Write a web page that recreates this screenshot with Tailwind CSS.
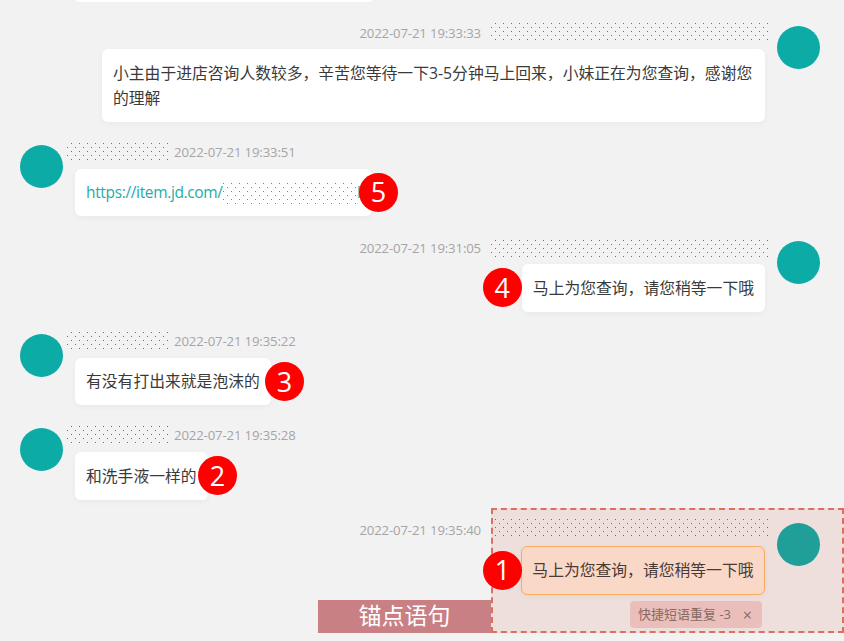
<!DOCTYPE html>
<html lang="zh-CN">
<head>
  <meta charset="UTF-8" />
  <meta name="viewport" content="width=device-width, initial-scale=1.0"/>
  <title>会话详情</title>
  <script src="https://cdn.jsdelivr.net/npm/@tailwindcss/browser@4"></script>
</head>
<body class="bg-[#f2f2f2] text-[#3a3a3a] font-['Open_Sans','Noto_Sans_CJK_SC',sans-serif]">

  <!-- shared dot patterns for the masked names -->
  <svg class="absolute w-0 h-0">
    <defs>
      <pattern id="dots" width="8" height="8" patternUnits="userSpaceOnUse">
        <rect x="4" y="1" width="1" height="1" fill="#3a8379"/>
        <rect x="0" y="5" width="1" height="1" fill="#3a8379"/>
      </pattern>
      <pattern id="dots-link" width="8" height="8" patternUnits="userSpaceOnUse">
        <rect x="0" y="1" width="1" height="1" fill="#18aca6"/>
        <rect x="4" y="5" width="1" height="1" fill="#18aca6"/>
      </pattern>
    </defs>
  </svg>

  <div class="relative w-[844px] h-[641px] overflow-hidden">

    <!-- end of previous bubble -->
    <div class="w-[296px] h-[2px] ml-[76px] bg-white rounded-b-md"></div>

    <!-- Message 1 -->
    <div class="flex justify-end gap-3 pr-6 mt-5">
      <div class="flex flex-col items-end">
        <div class="flex items-start gap-[10px] h-[27px] -mr-1">
          <span class="mt-[2px] text-[13.2px] tracking-[-0.15px] text-[#a5a5a5]">2022-07-21 19:33:33</span>
          <svg class="w-[278px] h-[18px]"><rect width="278" height="18" fill="url(#dots)"/></svg>
        </div>
        <div class="w-[663px] px-[11px] py-[11.5px] bg-white rounded-md text-[15.8px] leading-[25px] shadow-[0_2px_6px_rgba(0,0,0,0.04)]">小主由于进店咨询人数较多，辛苦您等待一下3-5分钟马上回来，小妹正在为您查询，感谢您的理解</div>
      </div>
      <div class="w-[43px] h-[43px] mt-1 rounded-full bg-[#0daba6]"></div>
    </div>

    <!-- Message 2 -->
    <div class="flex gap-3 pl-5 mt-[21px]">
      <div class="w-[43px] h-[43px] mt-[2px] rounded-full bg-[#0daba6]"></div>
      <div class="flex flex-col items-start">
        <div class="flex items-start gap-[3px] h-[26px] -ml-2 -mt-px pb-px box-content">
          <svg class="w-[104px] h-[18px]"><rect width="104" height="18" fill="url(#dots)"/></svg>
          <span class="mt-px text-[13.2px] tracking-[-0.15px] text-[#a5a5a5]">2022-07-21 19:33:51</span>
        </div>
        <div class="relative flex items-center w-[297px] h-[47px] pl-[11px] bg-white rounded-md text-[15.5px] tracking-[-0.35px] text-[#1eaca7] shadow-[0_2px_6px_rgba(0,0,0,0.04)]">
          <span class="w-[137px] shrink-0">https://item.jd.com/</span>
          <svg class="self-start mt-[13px] w-[134px] h-[22px] shrink-0"><rect width="134" height="22" fill="url(#dots-link)"/></svg>
          <span>l</span>
          <span class="absolute left-[284px] top-[4px] flex items-center justify-center w-[39px] h-[39px] rounded-full bg-[#ff0000] text-white text-[27px] tracking-normal">5</span>
        </div>
      </div>
    </div>

    <!-- Message 3 -->
    <div class="flex justify-end gap-3 pr-6 mt-[22px]">
      <div class="flex flex-col items-end">
        <div class="flex items-start gap-[10px] h-[26px] -mr-1">
          <span class="mt-px text-[13.2px] tracking-[-0.15px] text-[#a5a5a5]">2022-07-21 19:31:05</span>
          <svg class="mt-px w-[278px] h-[18px]"><rect width="278" height="18" fill="url(#dots)"/></svg>
        </div>
        <div class="relative px-[11px] py-[11.5px] bg-white rounded-md text-[15.8px] leading-[25px] shadow-[0_2px_6px_rgba(0,0,0,0.04)]">
          马上为您查询，请您稍等一下哦
          <span class="absolute left-[-39px] top-[4px] flex items-center justify-center w-[39px] h-[39px] rounded-full bg-[#ff0000] text-white text-[27px]">4</span>
        </div>
      </div>
      <div class="w-[43px] h-[43px] mt-[3px] rounded-full bg-[#0daba6]"></div>
    </div>

    <!-- Message 4 -->
    <div class="flex gap-3 pl-5 mt-5">
      <div class="w-[43px] h-[43px] mt-[2px] rounded-full bg-[#0daba6]"></div>
      <div class="flex flex-col items-start">
        <div class="flex items-start gap-[3px] h-[26px] -ml-2 -mt-px pb-px box-content">
          <svg class="w-[104px] h-[18px]"><rect width="104" height="18" fill="url(#dots)"/></svg>
          <span class="mt-px text-[13.2px] tracking-[-0.15px] text-[#a5a5a5]">2022-07-21 19:35:22</span>
        </div>
        <div class="relative px-[11px] py-[11px] bg-white rounded-md text-[15.8px] leading-[25px] shadow-[0_2px_6px_rgba(0,0,0,0.04)]">
          有没有打出来就是泡沫的
          <span class="absolute left-[190px] top-[4px] flex items-center justify-center w-[39px] h-[39px] rounded-full bg-[#ff0000] text-white text-[27px]">3</span>
        </div>
      </div>
    </div>

    <!-- Message 5 -->
    <div class="flex gap-3 pl-5 mt-[21px]">
      <div class="w-[43px] h-[43px] mt-[2px] rounded-full bg-[#0daba6]"></div>
      <div class="flex flex-col items-start">
        <div class="flex items-start gap-[3px] h-[26px] -ml-2 -mt-px pb-px box-content">
          <svg class="w-[104px] h-[18px]"><rect width="104" height="18" fill="url(#dots)"/></svg>
          <span class="mt-px text-[13.2px] tracking-[-0.15px] text-[#a5a5a5]">2022-07-21 19:35:28</span>
        </div>
        <div class="relative px-[11px] py-[11.5px] bg-white rounded-md text-[15.8px] leading-[25px] shadow-[0_2px_6px_rgba(0,0,0,0.04)]">
          和洗手液一样的
          <span class="absolute left-[123px] top-[4px] flex items-center justify-center w-[39px] h-[39px] rounded-full bg-[#ff0000] text-white text-[27px]">2</span>
        </div>
      </div>
    </div>

    <!-- Message 6 -->
    <div class="flex justify-end gap-3 pr-6 mt-[19px]">
      <div class="flex flex-col items-end">
        <div class="flex items-start gap-[10px] h-[27px] -mr-1">
          <span class="mt-[2px] text-[13.2px] tracking-[-0.15px] text-[#a5a5a5]">2022-07-21 19:35:40</span>
          <svg class="-mt-px w-[278px] h-[18px]"><rect width="278" height="18" fill="url(#dots)"/></svg>
        </div>
        <div class="relative px-[10.5px] py-[11px] bg-[#ffeadb] border border-[#fdb868] rounded-md text-[15.8px] leading-[25px] shadow-[0_2px_6px_rgba(0,0,0,0.04)]">
          马上为您查询，请您稍等一下哦
        </div>
        <div class="flex items-center justify-between w-[132px] h-[27px] mt-[6px] mr-[3px] pl-2 pr-[10px] bg-[#eecfcd] rounded-sm text-[13px] text-[#80706c]">
          <span>快捷短语重复 -3</span>
          <span class="text-[16px]">×</span>
        </div>
      </div>
      <div class="w-[43px] h-[43px] mt-[4px] rounded-full bg-[#0daba6]"></div>
    </div>

    <!-- Anchor highlight -->
    <div class="absolute left-[491px] top-[508px] w-[353px] h-[125px] border-2 border-dashed border-[#dd6f5e] bg-[#ca3e20]/10"></div>
    <div class="absolute left-[318px] top-[600px] flex items-center justify-center w-[173px] h-[33px] pb-[2px] bg-[#c98084] text-white text-[23px]">锚点语句</div>
    <span class="absolute left-[483px] top-[551px] flex items-center justify-center w-[39px] h-[39px] rounded-full bg-[#ff0000] text-white text-[27px]">1</span>
  </div>

</body>
</html>
